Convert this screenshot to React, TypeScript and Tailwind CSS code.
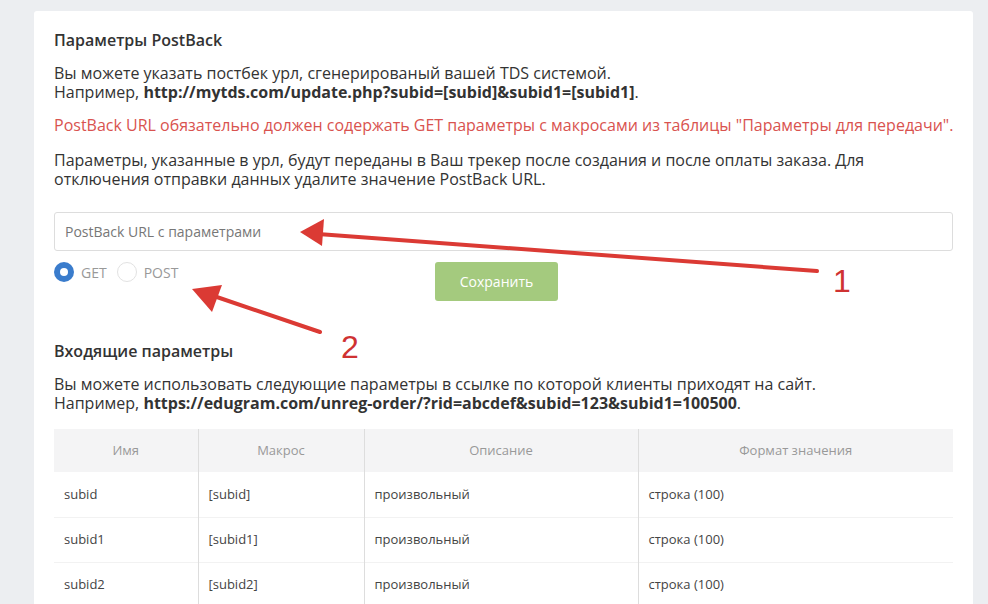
import React from "react";

const rows = [
  ["subid", "[subid]", "произвольный", "строка (100)"],
  ["subid1", "[subid1]", "произвольный", "строка (100)"],
  ["subid2", "[subid2]", "произвольный", "строка (100)"],
];

export default function App() {
  return (
    <div className="relative w-[988px] h-[604px] overflow-hidden bg-[#eceef1] pt-[11px] pl-[34px] pr-[15px] font-['Open_Sans',sans-serif] text-[#333]">
      <div className="bg-white rounded-[3px] h-[620px] px-[20px] pt-[18px]">
        <h3 className="text-[16px] leading-[22px] font-semibold text-[#333]">Параметры PostBack</h3>
        <p className="mt-[13px] text-[16px] leading-[19px]">
          Вы можете указать постбек урл, сгенерированый вашей TDS системой.
          <br />
          Например, <b>http://mytds.com/update.php?subid=[subid]&amp;subid1=[subid1]</b>.
        </p>
        <p className="mt-[14px] text-[16px] leading-[19px] text-[#d9534f] whitespace-nowrap">
          PostBack URL обязательно должен содержать GET параметры с макросами из таблицы "Параметры для передачи".
        </p>
        <p className="mt-[16px] text-[16px] leading-[19px] max-w-[830px]">
          Параметры, указанные в урл, будут переданы в Ваш трекер после создания и после оплаты заказа. Для отключения отправки данных удалите значение PostBack URL.
        </p>
        <div className="mt-[23px] h-[39px] border border-[#ddd] rounded-[3px] flex items-center px-[10px] text-[14px] text-[#777]">
          PostBack URL с параметрами
        </div>
        <div className="mt-[11px] flex items-start h-[39px]">
          <div className="w-[381px] flex items-center gap-[7px] h-[20px]">
            <span className="w-[20px] h-[20px] rounded-full bg-[#3a7ccc] flex items-center justify-center">
              <span className="w-[8px] h-[8px] rounded-full bg-white" />
            </span>
            <span className="text-[14px] text-[#999]">GET</span>
            <span className="ml-[3px] w-[20px] h-[20px] rounded-full border border-[#e2e2e2] bg-white" />
            <span className="text-[14px] text-[#999]">POST</span>
          </div>
          <button className="w-[123px] h-[39px] rounded-[3px] bg-[#a4ca7e] text-white text-[14px]">
            Сохранить
          </button>
        </div>
        <h3 className="mt-[39px] text-[16px] leading-[22px] font-semibold">Входящие параметры</h3>
        <p className="mt-[13px] text-[16px] leading-[19px]">
          Вы можете использовать следующие параметры в ссылке по которой клиенты приходят на сайт.
          <br />
          Например, <b>https://edugram.com/unreg-order/?rid=abcdef&amp;subid=123&amp;subid1=100500</b>.
        </p>
        <table className="mt-[16px] w-[899px] border-collapse text-[13px]">
          <thead>
            <tr className="bg-[#f4f4f5] h-[43px] text-[#999]">
              <th className="font-normal w-[144px] border-r border-[#ddd]">Имя</th>
              <th className="font-normal w-[166px] border-r border-[#ddd]">Макрос</th>
              <th className="font-normal w-[274px] border-r border-[#ddd]">Описание</th>
              <th className="font-normal">Формат значения</th>
            </tr>
          </thead>
          <tbody>
            {rows.map((r, i) => (
              <tr key={i} className="h-[45px] border-b border-[#f2f2f2] text-[#444]">
                <td className="px-[10px] border-r border-[#ddd]">{r[0]}</td>
                <td className="px-[10px] border-r border-[#ddd]">{r[1]}</td>
                <td className="px-[10px] border-r border-[#ddd]">{r[2]}</td>
                <td className="px-[10px]">{r[3]}</td>
              </tr>
            ))}
          </tbody>
        </table>
      </div>

      <svg className="absolute left-0 top-0 pointer-events-none" width="988" height="604" viewBox="0 0 988 604">
        <line x1="817" y1="271" x2="318" y2="234" stroke="#db3a34" strokeWidth="4" strokeLinecap="round" />
        <polygon points="300,232 324,219 322,246" fill="#db3a34" />
        <line x1="320" y1="332" x2="208" y2="294" stroke="#db3a34" strokeWidth="4" strokeLinecap="round" />
        <polygon points="192,289 222,285 212,312" fill="#db3a34" />
        <text x="833" y="292" fill="#cf3232" fontSize="32" fontFamily="Liberation Sans, sans-serif">1</text>
        <text x="341" y="358" fill="#cf3232" fontSize="32" fontFamily="Liberation Sans, sans-serif">2</text>
      </svg>
    </div>
  );
}
